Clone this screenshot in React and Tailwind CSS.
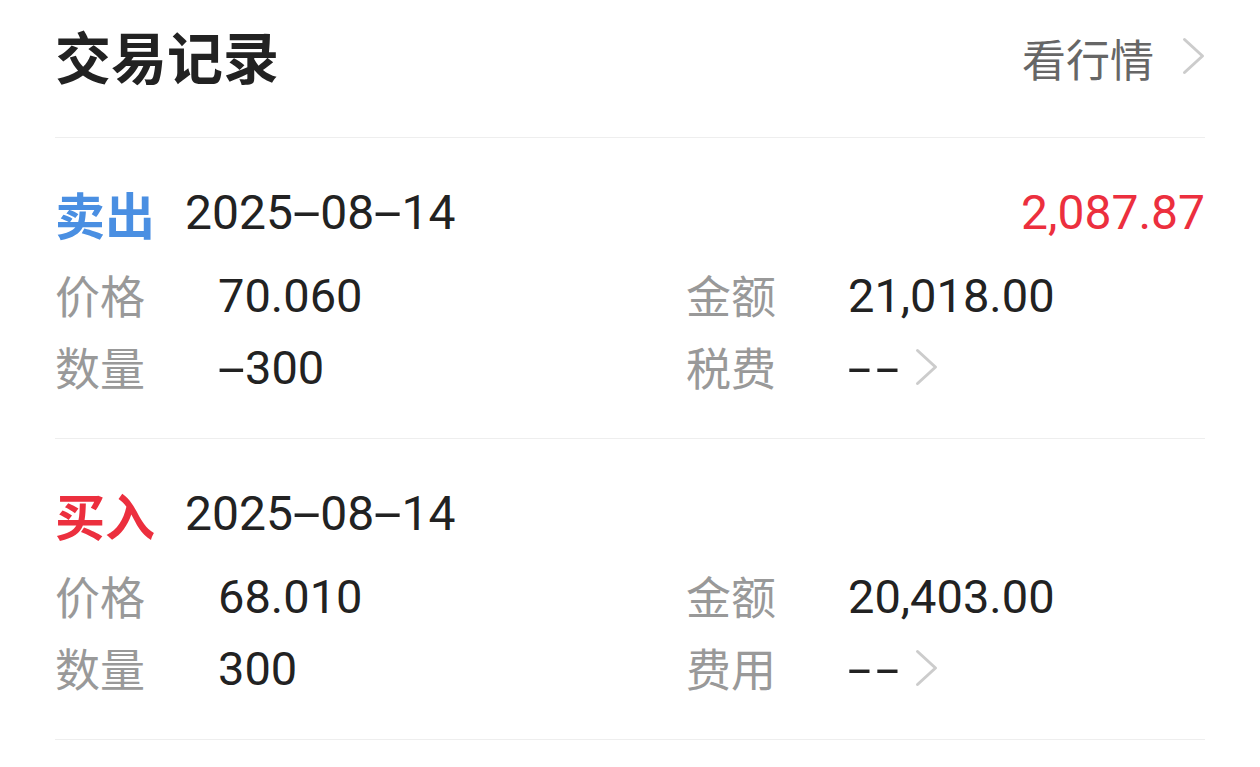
import React from 'react';

const cjk = { fontFamily: '"Noto Sans CJK SC", sans-serif' };
const num = { fontFamily: 'Roboto, "Noto Sans CJK SC", sans-serif' };

// DIN-style wide dashes between digits
const Num = ({ text }) => (
    <>
        {text.split('').map((c, i) =>
            c === '-' ? (
                <span key={i} className="inline-block mx-[7px] scale-x-[2.1]">-</span>
            ) : (
                c
            )
        )}
    </>
);

const Chevron = ({ className }) => (
    <svg viewBox="0 0 23 38" className={className} fill="none" stroke="#cccccc" strokeWidth="3" strokeLinecap="round" strokeLinejoin="round">
        <path d="M2.5 2.5 L20.5 19 L2.5 35.5" />
    </svg>
);

const Field = ({ label, value, wide, arrow }) => (
    <div className="flex items-center h-[72px]">
        <span className={`${wide ? 'w-[162px]' : 'w-[163px]'} text-[45px] text-[#999999]`} style={cjk}>{label}</span>
        <span className="text-[47px] text-[#222222] leading-none" style={num}>
            {arrow ? (
                <>
                    <span className="inline-block mx-[5px] scale-x-[1.8]">-</span>
                    <span className="inline-block ml-[10px] mr-[5px] scale-x-[1.8]">-</span>
                </>
            ) : (
                <Num text={value} />
            )}
        </span>
        {arrow && <Chevron className="w-[23px] h-[38px] ml-[16px]" />}
    </div>
);

const trades = [
    {
        side: '卖出', sideColor: 'text-[#4a8fe2]', date: '2025-08-14', profit: '2,087.87',
        price: '70.060', qty: '-300', amount: '21,018.00', feeLabel: '税费',
    },
    {
        side: '买入', sideColor: 'text-[#ec2f3e]', date: '2025-08-14', profit: null,
        price: '68.010', qty: '300', amount: '20,403.00', feeLabel: '费用',
    },
];

export default function App() {
    return (
        <div className="w-[1260px] h-[767px] bg-white px-[55px] overflow-hidden">
            <div className="flex items-center justify-between h-[138px] border-b border-[#eeeeee]">
                <h1 className="text-[56px] font-bold text-[#222222] leading-none -mt-[28px]" style={cjk}>交易记录</h1>
                <div className="flex items-center gap-[28px] -mt-[22px]">
                    <span className="text-[44px] text-[#666666] leading-none" style={cjk}>看行情</span>
                    <Chevron className="w-[23px] h-[38px] -mt-[4px]" />
                </div>
            </div>

            {trades.map((t, i) => (
                <div key={i} className="pt-[39px] pb-[35px] border-b border-[#eeeeee]">
                    <div className="flex items-center justify-between h-[72px]">
                        <div className="flex items-center">
                            <span className={`text-[50px] font-bold leading-none ${t.sideColor}`} style={cjk}>{t.side}</span>
                            <span className="ml-[30px] text-[48px] text-[#222222] leading-none" style={num}><Num text={t.date} /></span>
                        </div>
                        {t.profit && (
                            <span className="text-[48px] text-[#ec2f3e] leading-none" style={num}>{t.profit}</span>
                        )}
                    </div>
                    <div className="grid grid-cols-[631px_1fr] mt-[10px]">
                        <Field label="价格" value={t.price} />
                        <Field label="金额" value={t.amount} wide />
                        <Field label="数量" value={t.qty} />
                        <Field label={t.feeLabel} value="--" wide arrow />
                    </div>
                </div>
            ))}
        </div>
    );
}
